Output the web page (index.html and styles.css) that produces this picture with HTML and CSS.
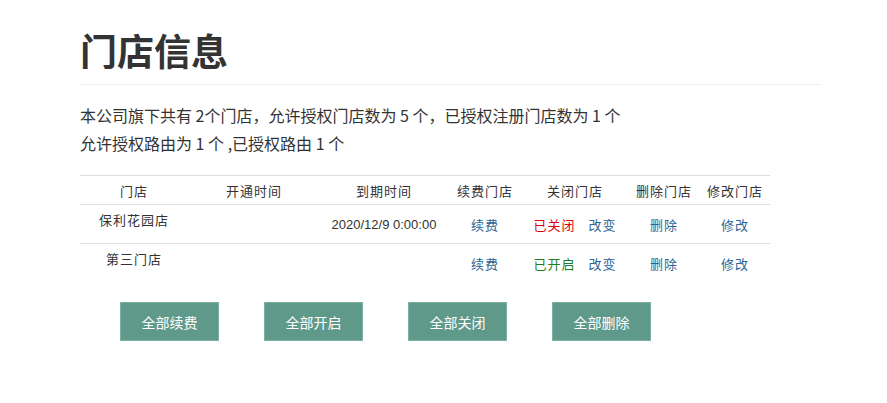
FILE: index.html
```html
<!DOCTYPE html>
<html lang="zh-CN">
<head>
<meta charset="utf-8">
<title>门店信息</title>
<link rel="stylesheet" href="styles.css">
</head>
<body>
<div class="page">
  <h1 class="title">门店信息</h1>
  <div class="summary">
    <p>本公司旗下共有 2个门店，允许授权门店数为 5 个，已授权注册门店数为 1 个</p>
    <p>允许授权路由为 1 个 ,已授权路由 1 个</p>
  </div>
  <table class="stores">
    <thead>
      <tr>
        <th class="c1">门店</th>
        <th class="c2">开通时间</th>
        <th class="c3">到期时间</th>
        <th class="c4">续费门店</th>
        <th class="c5">关闭门店</th>
        <th class="c6">删除门店</th>
        <th class="c7">修改门店</th>
      </tr>
    </thead>
    <tbody>
      <tr>
        <td class="name">保利花园店</td>
        <td></td>
        <td class="date">2020/12/9 0:00:00</td>
        <td><a class="link">续费</a></td>
        <td><span class="closed">已关闭</span><a class="link change">改变</a></td>
        <td><a class="link">删除</a></td>
        <td><a class="link">修改</a></td>
      </tr>
      <tr>
        <td class="name">第三门店</td>
        <td></td>
        <td class="date"></td>
        <td><a class="link">续费</a></td>
        <td><span class="open">已开启</span><a class="link change">改变</a></td>
        <td><a class="link">删除</a></td>
        <td><a class="link">修改</a></td>
      </tr>
    </tbody>
  </table>
  <div class="actions">
    <button class="btn">全部续费</button>
    <button class="btn">全部开启</button>
    <button class="btn">全部关闭</button>
    <button class="btn">全部删除</button>
  </div>
</div>
</body>
</html>
```

FILE: styles.css
```css
html, body {
  margin: 0;
  padding: 0;
  background: #fff;
}
body {
  font-family: "Noto Sans CJK SC", "Liberation Sans", sans-serif;
  color: #333;
}
.page {
  margin-left: 80px;
  width: 740px;
  padding-top: 24px;
}
.title {
  margin: 0;
  font-size: 37px;
  font-weight: bold;
  line-height: 53px;
  color: #333;
  padding-bottom: 7px;
  border-bottom: 1px solid #eee;
}
.summary {
  padding-top: 16px;
  font-size: 16px;
  line-height: 28px;
  color: #333;
}
.summary p {
  margin: 0;
}
.stores {
  margin-top: 18px;
  border-collapse: collapse;
  width: 690px;
  table-layout: fixed;
  font-size: 13px;
  color: #333;
}
.stores th {
  font-weight: normal;
  height: 28px;
  text-align: center;
  border-top: 1px solid #ddd;
  border-bottom: 1px solid #ddd;
  padding: 0;
  letter-spacing: 1px;
}
.stores td {
  height: 38px;
  text-align: center;
  vertical-align: middle;
  border-bottom: 1px solid #ddd;
  padding: 0;
  letter-spacing: 1px;
}
.stores tbody tr:last-child td {
  border-bottom: none;
}
.stores td.name {
  vertical-align: top;
  padding-top: 5px;
  height: 33px;
}
.stores td.date {
  letter-spacing: 0;
  font-family: "Liberation Sans", sans-serif;
  font-size: 13px;
}
.c1 { width: 108px; }
.c2 { width: 132px; }
.c3 { width: 128px; }
.c4 { width: 74px; }
.c5 { width: 106px; }
.c6 { width: 72px; }
.c7 { width: 70px; }
.link {
  color: #2a6496;
  text-decoration: none;
}
.change {
  margin-left: 13px;
}
.closed {
  color: #d9000f;
}
.open {
  color: #1d7d1d;
}
.actions {
  display: flex;
  gap: 45px;
  margin-top: 20px;
  padding-left: 40px;
}
.btn {
  width: 99px;
  height: 39px;
  background: #5f998a;
  color: #fff;
  border: 1px solid #7fb0a3;
  font-family: "Noto Sans CJK SC", sans-serif;
  font-size: 14px;
  padding: 0;
}
```
